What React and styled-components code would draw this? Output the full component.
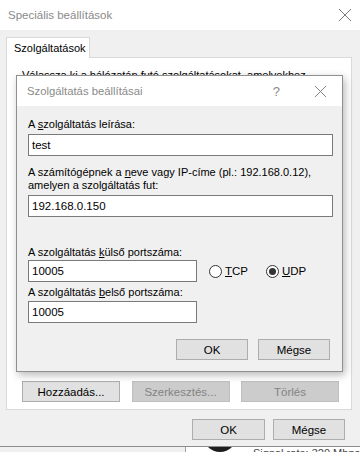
import styled, { createGlobalStyle } from "styled-components";

const Global = createGlobalStyle`
  html, body { margin: 0; padding: 0; background: #ffffff; }
  body {
    width: 360px;
    height: 452px;
    overflow: hidden;
    font-family: "Liberation Sans", Arial, sans-serif;
    font-size: 11px;
    color: #000;
  }
`;

const Page = styled.div`
  width: 360px;
  height: 452px;
  display: flex;
  flex-direction: column;
  overflow: hidden;
`;

const Window = styled.div`
  position: relative;
  height: 446px;
  display: flex;
  flex-direction: column;
  background: #f0f0f0;
  border-bottom: 1px solid #8c8c8c;
`;

const TitleBar = styled.div`
  height: 30px;
  flex-shrink: 0;
  display: flex;
  align-items: center;
  justify-content: space-between;
  background: #ffffff;
  padding: 0 ${(p) => p.$right || 8}px 0 ${(p) => p.$left || 8}px;
`;

const TitleText = styled.span`
  font-size: ${(p) => p.$size || 11.5}px;
  color: #8a8a8a;
`;

const TitleIcons = styled.div`
  display: flex;
  align-items: center;
  gap: 34px;
`;

const Help = styled.span`
  font-size: 13px;
  color: #8a8a8a;
`;

const Body = styled.div`
  flex: 1;
  display: flex;
  flex-direction: column;
  padding: 7px 8px 0 6px;
`;

const TabStrip = styled.div`
  display: flex;
  height: 20px;
`;

const Tab = styled.div`
  width: 84px;
  height: 21px;
  box-sizing: border-box;
  background: #ffffff;
  border: 1px solid #d9d9d9;
  border-bottom: none;
  padding: 4px 0 0 7px;
  position: relative;
  z-index: 1;
  white-space: nowrap;
`;

const Panel = styled.div`
  height: 353px;
  box-sizing: border-box;
  background: #ffffff;
  border: 1px solid #d9d9d9;
  display: flex;
  flex-direction: column;
  padding: 11px 12px 7px 15px;
`;

const Intro = styled.div`
  line-height: 13px;
  white-space: nowrap;
  overflow: hidden;
`;

const ListArea = styled.div`
  flex: 1;
`;

const ButtonRow = styled.div`
  display: flex;
  justify-content: ${(p) => p.$justify || "flex-end"};
  gap: ${(p) => p.$gap || 8}px;
  margin-top: ${(p) => p.$top || 0}px;
  padding-right: ${(p) => p.$right || 0}px;
`;

const Button = styled.button`
  width: ${(p) => p.$w || 72}px;
  height: 21px;
  box-sizing: border-box;
  margin: 0;
  padding: 0;
  font-family: inherit;
  font-size: 11.5px;
  color: ${(p) => (p.disabled ? "#838383" : "#000")};
  background: ${(p) => (p.disabled ? "#cccccc" : "#e1e1e1")};
  border: 1px solid ${(p) => (p.disabled ? "#bfbfbf" : "#adadad")};
  border-radius: 0;
`;

const Footer = styled.div`
  display: flex;
  justify-content: flex-end;
  gap: 8px;
  padding: 9px 7px 0 0;
`;

const Dialog = styled.div`
  position: absolute;
  left: 16px;
  top: 75px;
  width: 327px;
  height: 297px;
  box-sizing: border-box;
  border: 1px solid #8f8f8f;
  background: #f0f0f0;
  box-shadow: 2px 3px 8px rgba(0, 0, 0, 0.28);
  display: flex;
  flex-direction: column;
  z-index: 2;
`;

const DialogBody = styled.div`
  padding: 11px 9px 0 11px;
  display: flex;
  flex-direction: column;
`;

const Label = styled.div`
  line-height: ${(p) => p.$lh || 14}px;
  margin-top: ${(p) => p.$top || 0}px;
  white-space: nowrap;
`;

const Input = styled.div`
  width: ${(p) => p.$w || 305}px;
  height: 22px;
  box-sizing: border-box;
  margin-top: ${(p) => p.$top || 3}px;
  border: 1px solid #7a7a7a;
  background: #ffffff;
  padding: 3px 0 0 3px;
  line-height: 14px;
  font-size: 11.5px;
`;

const PortRow = styled.div`
  display: flex;
  align-items: flex-start;
`;

const Radio = styled.label`
  width: ${(p) => p.$w || 57}px;
  flex-shrink: 0;
  display: flex;
  align-items: center;
  gap: 3px;
  margin: ${(p) => p.$top || 5}px 0 0 ${(p) => p.$left || 0}px;
  line-height: 14px;
  font-size: 11.5px;
`;

const Circle = styled.span`
  width: 13px;
  height: 13px;
  box-sizing: border-box;
  border-radius: 50%;
  border: 1px solid #333333;
  background: #ffffff;
  display: flex;
  align-items: center;
  justify-content: center;
  &::after {
    content: "";
    width: 7px;
    height: 7px;
    border-radius: 50%;
    background: ${(p) => (p.$checked ? "#333333" : "transparent")};
  }
`;

const Behind = styled.div`
  flex: 1;
  display: flex;
  overflow: hidden;
`;

const BehindLeft = styled.div`
  width: 185px;
  background: #f0f0f0;
  border-right: 1px solid #a0a0a0;
`;

const BehindRight = styled.div`
  flex: 1;
  display: flex;
  align-items: flex-start;
  background: #ffffff;
  padding-left: 17px;
  gap: 16px;
`;

const Blob = styled.div`
  width: 34px;
  height: 34px;
  border-radius: 50%;
  background: #1e1e1e;
  margin-top: -29px;
  flex-shrink: 0;
`;

const BehindText = styled.div`
  font-size: 11px;
  color: #444;
  line-height: 11px;
  margin-top: 1px;
  white-space: nowrap;
`;

const CloseIcon = ({ size = 14 }) => (
  <svg width={size} height={size} viewBox="0 0 14 14">
    <path d="M1 1 L13 13 M13 1 L1 13" stroke="#7a7a7a" strokeWidth="1" fill="none" />
  </svg>
);

export default function App() {
  return (
    <Page>
      <Global />
      <Window>
        <TitleBar $right={8}>
          <TitleText>Speciális beállítások</TitleText>
          <CloseIcon />
        </TitleBar>
        <Body>
          <TabStrip>
            <Tab>Szolgáltatások</Tab>
          </TabStrip>
          <Panel>
            <Intro>Válassza ki a hálózatán futó szolgáltatásokat, amelyekhez</Intro>
            <ListArea />
            <ButtonRow $justify="space-between" $gap={0}>
              <Button $w={98}>Hozzáadás...</Button>
              <Button $w={98} disabled>Szerkesztés...</Button>
              <Button $w={98} disabled>Törlés</Button>
            </ButtonRow>
          </Panel>
          <Footer>
            <Button $w={73}>OK</Button>
            <Button $w={72}>Mégse</Button>
          </Footer>
        </Body>

        <Dialog>
          <TitleBar $left={10} $right={15}>
            <TitleText $size={11.3}>Szolgáltatás beállításai</TitleText>
            <TitleIcons>
              <Help>?</Help>
              <CloseIcon size={13} />
            </TitleIcons>
          </TitleBar>
          <DialogBody>
            <Label>A <u>s</u>zolgáltatás leírása:</Label>
            <Input>test</Input>
            <Label $lh={13} $top={10}>
              A számítógépnek a <u>n</u>eve vagy IP-címe (pl.: 192.168.0.12),
              <br />
              amelyen a szolgáltatás fut:
            </Label>
            <Input>192.168.0.150</Input>
            <Label $top={28}>A szolgáltatás <u>k</u>ülső portszáma:</Label>
            <PortRow>
              <Input $w={169} $top={1}>10005</Input>
              <Radio $left={12}>
                <Circle />
                <span><u>T</u>CP</span>
              </Radio>
              <Radio>
                <Circle $checked />
                <span><u>U</u>DP</span>
              </Radio>
            </PortRow>
            <Label $top={3}>A szolgáltatás <u>b</u>első portszáma:</Label>
            <Input $w={169} $top={2}>10005</Input>
            <ButtonRow $gap={10} $top={16} $right={3}>
              <Button>OK</Button>
              <Button>Mégse</Button>
            </ButtonRow>
          </DialogBody>
        </Dialog>
      </Window>
      <Behind>
        <BehindLeft />
        <BehindRight>
          <Blob />
          <BehindText>Signal rate: 320 Mbps</BehindText>
        </BehindRight>
      </Behind>
    </Page>
  );
}
